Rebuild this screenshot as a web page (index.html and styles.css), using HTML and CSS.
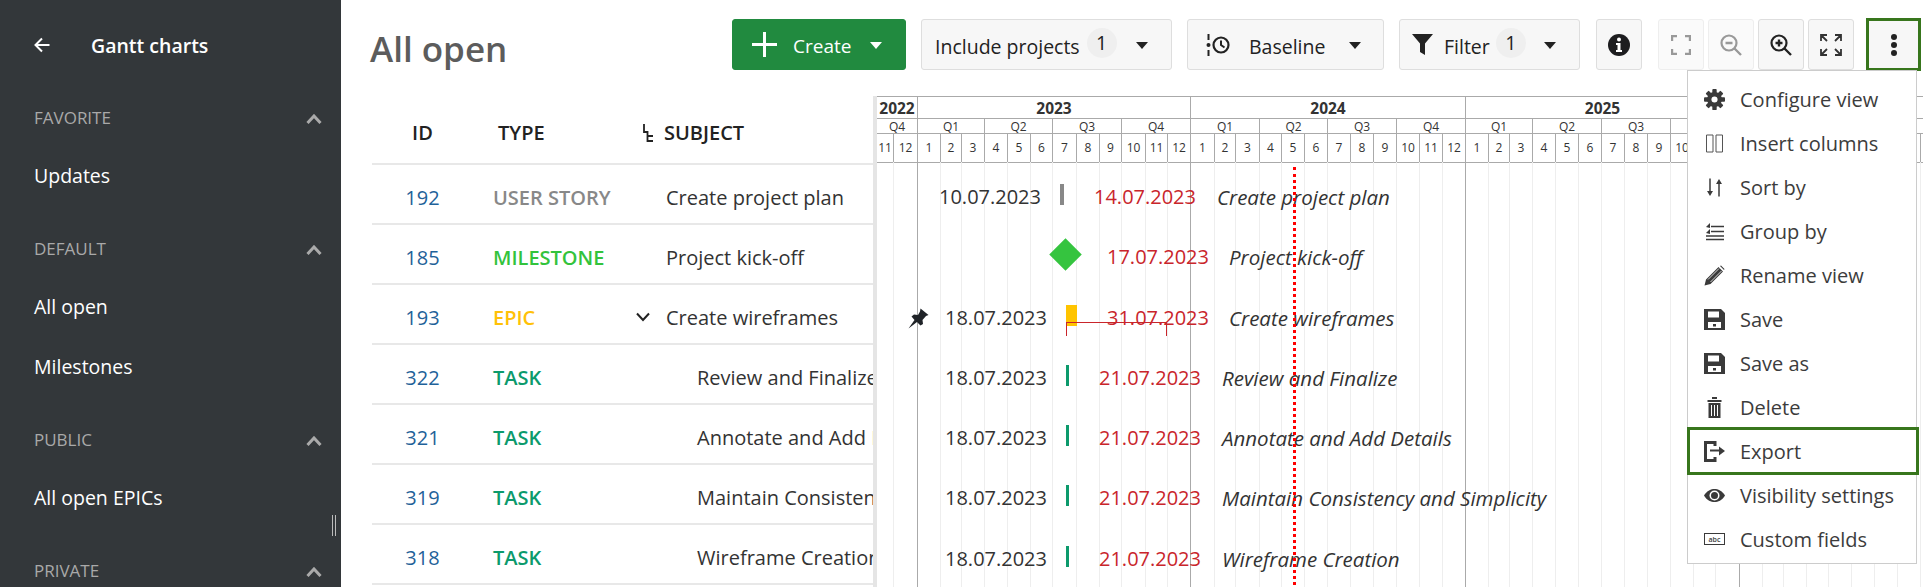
FILE: index.html
```html
<!DOCTYPE html>
<html lang="en">
<head>
    <meta charset="UTF-8">
    <title>All open - Gantt charts</title>
    <link rel="stylesheet" href="styles.css">
</head>
<body>
    <aside class="sidebar">
        <div class="side-title">
            <svg class="back-icon" width="16" height="16" viewBox="0 0 16 16"><path d="M15.5 8H2M8 1.5 1.5 8 8 14.5" fill="none" stroke="#fff" stroke-width="2"/></svg>
            <span>Gantt charts</span>
        </div>
        <div class="side-head">FAVORITE <svg class="chev" width="16" height="10" viewBox="0 0 16 10"><path d="M1.5 9 8 2l6.5 7" fill="none" stroke="#aaa" stroke-width="3"/></svg></div>
        <a class="side-item">Updates</a>
        <div class="side-head gap">DEFAULT <svg class="chev" width="16" height="10" viewBox="0 0 16 10"><path d="M1.5 9 8 2l6.5 7" fill="none" stroke="#aaa" stroke-width="3"/></svg></div>
        <a class="side-item">All open</a>
        <a class="side-item">Milestones</a>
        <div class="side-head gap">PUBLIC <svg class="chev" width="16" height="10" viewBox="0 0 16 10"><path d="M1.5 9 8 2l6.5 7" fill="none" stroke="#aaa" stroke-width="3"/></svg></div>
        <a class="side-item">All open EPICs</a>
        <div class="side-head gap">PRIVATE <svg class="chev" width="16" height="10" viewBox="0 0 16 10"><path d="M1.5 9 8 2l6.5 7" fill="none" stroke="#aaa" stroke-width="3"/></svg></div>
        <div class="side-handle"></div>
    </aside>

    <main class="content">
        <div class="topbar">
            <h1>All open</h1>
            <div class="toolbar">
                <button class="btn btn-create">
                    <svg width="25" height="25" viewBox="0 0 25 25"><path d="M12.5 0v25M0 12.5h25" stroke="#fff" stroke-width="3"/></svg>
                    <span>Create</span><i class="caret"></i>
                </button>
                <button class="btn btn-include">
                    <span>Include projects</span><b class="count">1</b><i class="caret"></i>
                </button>
                <button class="btn btn-baseline">
                    <svg width="24" height="24" viewBox="0 0 24 24"><path d="M2.5 1v6M2.5 17v6" stroke="#222" stroke-width="2"/><circle cx="2.5" cy="12" r="2" fill="#222"/><circle cx="15" cy="12" r="7.5" fill="none" stroke="#222" stroke-width="2.2"/><path d="M15 7.5V12l3.5 2.5" fill="none" stroke="#222" stroke-width="2"/></svg>
                    <span>Baseline</span><i class="caret"></i>
                </button>
                <button class="btn btn-filter">
                    <svg width="21" height="21" viewBox="0 0 21 21"><path d="M0 0h21l-8 9.5V21l-5-3V9.5z" fill="#222"/></svg>
                    <span>Filter</span><b class="count">1</b><i class="caret"></i>
                </button>
                <button class="btn btn-icon btn-info">
                    <svg width="22" height="22" viewBox="0 0 22 22"><circle cx="11" cy="11" r="11" fill="#1d1d1f"/><circle cx="11" cy="5.5" r="2" fill="#fff"/><path d="M8 9h4.5v7H14v2H8v-2h1.5v-5H8z" fill="#fff"/></svg>
                </button>
                <div class="zoom-group">
                    <button class="btn btn-icon dim">
                        <svg width="20" height="20" viewBox="0 0 20 20"><path d="M1 6V1h5M14 1h5v5M19 14v5h-5M6 19H1v-5" fill="none" stroke="#999" stroke-width="2.4"/></svg>
                    </button>
                    <button class="btn btn-icon dim">
                        <svg width="22" height="22" viewBox="0 0 22 22"><circle cx="9" cy="9" r="7.5" fill="none" stroke="#999" stroke-width="2.2"/><path d="M5.5 9h7M14.5 14.5 21 21" stroke="#999" stroke-width="2.4"/></svg>
                    </button>
                    <button class="btn btn-icon">
                        <svg width="22" height="22" viewBox="0 0 22 22"><circle cx="9" cy="9" r="7.5" fill="none" stroke="#222" stroke-width="2.2"/><path d="M5.5 9h7M9 5.5v7M14.5 14.5 21 21" stroke="#222" stroke-width="2.4"/></svg>
                    </button>
                    <button class="btn btn-icon">
                        <svg width="22" height="22" viewBox="0 0 22 22"><path d="M1 7V1h6M1 1l6 6M15 1h6v6M21 1l-6 6M1 15v6h6M1 21l6-6M21 15v6h-6M21 21l-6-6" fill="none" stroke="#333" stroke-width="1.8"/></svg>
                    </button>
                </div>
                <button class="btn btn-icon btn-more">
                    <svg width="8" height="24" viewBox="0 0 8 24"><circle cx="4" cy="4" r="3" fill="#222"/><circle cx="4" cy="12" r="3" fill="#222"/><circle cx="4" cy="20" r="3" fill="#222"/></svg>
                </button>
            </div>
        </div>

        <div class="workarea">
            <div class="table">
                <div class="row head">
                    <div class="c-id">ID</div>
                    <div class="c-type">TYPE</div>
                    <div class="c-subject">
                        <svg class="tree-icon" width="10" height="18" viewBox="0 0 10 18"><path d="M1 0v8h3.500v9H10M4.500 12H10" fill="none" stroke="#222" stroke-width="1.8"/></svg>
                        SUBJECT
                    </div>
                </div>
                <div class="row">
                    <div class="c-id"><a>192</a></div><div class="c-type t-story">USER STORY</div>
                    <div class="c-subject">Create project plan</div>
                </div>
                <div class="row">
                    <div class="c-id"><a>185</a></div><div class="c-type t-milestone">MILESTONE</div>
                    <div class="c-subject">Project kick-off</div>
                </div>
                <div class="row">
                    <div class="c-id"><a>193</a></div><div class="c-type t-epic">EPIC</div>
                    <div class="c-subject">
                        <svg class="fold-icon" width="14" height="10" viewBox="0 0 14 10"><path d="M1 1.500l6 6.500 6-6.500" fill="none" stroke="#222" stroke-width="2"/></svg>
                        Create wireframes
                    </div>
                </div>
                <div class="row">
                    <div class="c-id"><a>322</a></div><div class="c-type t-task">TASK</div>
                    <div class="c-subject child">Review and Finalize</div>
                </div>
                <div class="row">
                    <div class="c-id"><a>321</a></div><div class="c-type t-task">TASK</div>
                    <div class="c-subject child">Annotate and Add Details</div>
                </div>
                <div class="row">
                    <div class="c-id"><a>319</a></div><div class="c-type t-task">TASK</div>
                    <div class="c-subject child">Maintain Consistency and Simplicity</div>
                </div>
                <div class="row">
                    <div class="c-id"><a>318</a></div><div class="c-type t-task">TASK</div>
                    <div class="c-subject child">Wireframe Creation</div>
                </div>
            </div>

            <div class="gantt">
                <div class="tl-years">
                    <span class="w41">2022</span><span class="w273">2023</span><span class="w275">2024</span><span class="w274">2025</span><span class="w275"></span>
                </div>
                <div class="tl-quarters">
                    <span class="w41">Q4</span>
                    <span class="w67">Q1</span><span class="w68">Q2</span><span class="w69">Q3</span><span class="w69">Q4</span>
                    <span class="w69">Q1</span><span class="w68">Q2</span><span class="w69">Q3</span><span class="w69">Q4</span>
                    <span class="w67">Q1</span><span class="w69">Q2</span><span class="w69">Q3</span><span class="w69"></span>
                    <span class="w67"></span><span class="w68"></span><span class="w69"></span>
                </div>
                <div class="tl-months">
                    <span class="w17">11</span><span class="w24 end">12</span>
                    <span class="w23">1</span><span class="w21">2</span><span class="w23">3</span><span class="w23">4</span><span class="w23">5</span><span class="w22">6</span><span class="w24">7</span><span class="w23">8</span><span class="w22">9</span><span class="w24">10</span><span class="w22">11</span><span class="w23 end">12</span>
                    <span class="w24">1</span><span class="w21">2</span><span class="w24">3</span><span class="w22">4</span><span class="w23">5</span><span class="w23">6</span><span class="w23">7</span><span class="w23">8</span><span class="w23">9</span><span class="w23">10</span><span class="w23">11</span><span class="w23 end">12</span>
                    <span class="w23">1</span><span class="w21">2</span><span class="w23">3</span><span class="w23">4</span><span class="w23">5</span><span class="w23">6</span><span class="w23">7</span><span class="w23">8</span><span class="w23">9</span><span class="w23">10</span><span class="w22"></span><span class="w24 end"></span>
                    <span class="w23"></span><span class="w21"></span><span class="w23"></span><span class="w22"></span><span class="w23"></span><span class="w23"></span><span class="w23"></span><span class="w23"></span>
                </div>
                <div class="tl-body">
                    <div class="today"></div>
                    <div class="g-row">
                        <span class="g-date" style="left:62px">10.07.2023</span>
                        <i class="g-bar bar-story" style="left:183px;width:4px"></i>
                        <span class="g-date late" style="left:217px">14.07.2023</span>
                        <span class="g-name" style="left:340px">Create project plan</span>
                    </div>
                    <div class="g-row">
                        <i class="g-diamond" style="left:177px"></i>
                        <span class="g-date late" style="left:230px">17.07.2023</span>
                        <span class="g-name" style="left:352px">Project kick-off</span>
                    </div>
                    <div class="g-row">
                        <svg class="g-pin" width="21" height="21" viewBox="0 0 21 21"><path d="M12.500 0.500 20.500 7l-2.500 1-3.500 4 .5 4-2.500 1.500-3.500-3.500L.5 20.500 6.500 12 3.500 8.500 6 6.500l4 .5 2-3.500z" fill="#1f2328"/></svg>
                        <span class="g-date" style="left:68px">18.07.2023</span>
                        <i class="g-bar bar-epic" style="left:189px;width:11px"></i>
                        <i class="g-base" style="left:189px;width:101px"></i>
                        <span class="g-date late" style="left:230px">31.07.2023</span>
                        <span class="g-name" style="left:352px">Create wireframes</span>
                    </div>
                    <div class="g-row">
                        <span class="g-date" style="left:68px">18.07.2023</span>
                        <i class="g-bar bar-task" style="left:189px;width:3px"></i>
                        <span class="g-date late" style="left:222px">21.07.2023</span>
                        <span class="g-name" style="left:345px">Review and Finalize</span>
                    </div>
                    <div class="g-row">
                        <span class="g-date" style="left:68px">18.07.2023</span>
                        <i class="g-bar bar-task" style="left:189px;width:3px"></i>
                        <span class="g-date late" style="left:222px">21.07.2023</span>
                        <span class="g-name" style="left:345px">Annotate and Add Details</span>
                    </div>
                    <div class="g-row">
                        <span class="g-date" style="left:68px">18.07.2023</span>
                        <i class="g-bar bar-task" style="left:189px;width:3px"></i>
                        <span class="g-date late" style="left:222px">21.07.2023</span>
                        <span class="g-name" style="left:345px">Maintain Consistency and Simplicity</span>
                    </div>
                    <div class="g-row">
                        <span class="g-date" style="left:68px">18.07.2023</span>
                        <i class="g-bar bar-task" style="left:189px;width:3px"></i>
                        <span class="g-date late" style="left:222px">21.07.2023</span>
                        <span class="g-name" style="left:345px">Wireframe Creation</span>
                    </div>
                </div>
            </div>
        </div>

        <ul class="menu">
            <li><svg width="21" height="21" viewBox="0 0 24 24"><g fill="#3a3a3a"><rect x="9.500" y="0" width="5" height="24" rx="1"/><rect x="9.500" y="0" width="5" height="24" rx="1" transform="rotate(45 12 12)"/><rect x="9.500" y="0" width="5" height="24" rx="1" transform="rotate(90 12 12)"/><rect x="9.500" y="0" width="5" height="24" rx="1" transform="rotate(135 12 12)"/><circle cx="12" cy="12" r="8.500"/></g><circle cx="12" cy="12" r="3.500" fill="#fff"/></svg>Configure view</li>
            <li><svg width="21" height="21" viewBox="0 0 21 21"><path d="M2.500 2h6.500v17H2.500zM12 2h6.500v17H12z" fill="none" stroke="#555" stroke-width="1"/></svg>Insert columns</li>
            <li><svg width="21" height="21" viewBox="0 0 21 21"><path d="M6 1.500v14" stroke="#3a3a3a" stroke-width="1.500"/><path d="M3 14h6l-3 5z" fill="#3a3a3a"/><path d="M15 19.500v-14" stroke="#3a3a3a" stroke-width="1.500"/><path d="M12 7h6l-3-5z" fill="#3a3a3a"/></svg>Sort by</li>
            <li><svg width="21" height="21" viewBox="0 0 21 21"><path d="M7 5.500h13M7 10.500h13M2 15h18M2 18.500h18" stroke="#3a3a3a" stroke-width="1.500"/><path d="M6 2v5l-4-1zM6 8v5l-4-1z" fill="#3a3a3a"/></svg>Group by</li>
            <li><svg width="21" height="21" viewBox="0 0 21 21"><path d="M.5 20.500 2 14.500 14.500 2l4.500 4.500L6.500 19zM16 1l1-.5 3.500 3.500-.5 1z" fill="#3a3a3a"/><path d="M4 14.500 15 3.500M6.500 17 17.500 6" stroke="#fff" stroke-width=".8"/></svg>Rename view</li>
            <li><svg width="21" height="21" viewBox="0 0 21 21"><path d="M0 0h17l4 4v17H0z" fill="#3a3a3a"/><path d="M4 2.500h11v6H4z" fill="#fff"/><path d="M4 13h13v6H4z" fill="#fff"/><rect x="9" y="15" width="3" height="2.500" fill="#3a3a3a"/></svg>Save</li>
            <li><svg width="21" height="21" viewBox="0 0 21 21"><path d="M0 0h17l4 4v17H0z" fill="#3a3a3a"/><path d="M4 2.500h11v6H4z" fill="#fff"/><path d="M4 13h13v6H4z" fill="#fff"/><rect x="9" y="15" width="3" height="2.500" fill="#3a3a3a"/></svg>Save as</li>
            <li><svg width="21" height="21" viewBox="0 0 21 21"><path d="M3.500 3h14v2h-14zM8 0h5v2H8zM4.500 6h12v15h-12z" fill="#3a3a3a"/><path d="M7.500 8v11M10.500 8v11M13.500 8v11" stroke="#fff" stroke-width="1"/></svg>Delete</li>
            <li class="active"><svg width="21" height="21" viewBox="0 0 21 21"><path d="M11 5V1.500H1.500v18H11V16" fill="none" stroke="#3a3a3a" stroke-width="3"/><path d="M6 9.500h9.500" stroke="#3a3a3a" stroke-width="2"/><path d="M15 5.500l6 4.500-6 4.500z" fill="#3a3a3a"/></svg>Export</li>
            <li><svg width="21" height="21" viewBox="0 0 21 21"><path d="M0 10.500C3 5.500 7 4 10.500 4S18 5.500 21 10.500C18 15.500 14 17 10.500 17S3 15.500 0 10.500z" fill="#3a3a3a"/><circle cx="10.500" cy="10.500" r="5" fill="#fff"/><circle cx="10.500" cy="10.500" r="3.500" fill="#3a3a3a"/></svg>Visibility settings</li>
            <li><svg width="21" height="21" viewBox="0 0 21 21"><rect x=".5" y="4.500" width="20" height="11" fill="none" stroke="#3a3a3a"/><text x="10.500" y="13" text-anchor="middle" class="abc">abc</text></svg>Custom fields</li>
        </ul>
    </main>
</body>
</html>
```

FILE: styles.css
```css
* {
    box-sizing: border-box;
}
html, body {
    margin: 0;
    height: 587px;
    overflow: hidden;
}
body {
    display: flex;
    font-family: "Open Sans", "Noto Sans", sans-serif;
    color: #333;
    background-color: #fff;
}

/* sidebar */
.sidebar {
    position: relative;
    flex: none;
    width: 341px;
    height: 587px;
    padding: 30px 19px 0 34px;
    background-color: #33373a;
    color: #fff;
}
.side-title {
    display: flex;
    align-items: center;
    height: 30px;
    margin-bottom: 42px;
    font-size: 19.500px;
    font-weight: 600;
}
.back-icon {
    margin-right: 41px;
}
.side-head {
    display: flex;
    align-items: center;
    justify-content: space-between;
    height: 30px;
    margin-bottom: 13px;
    font-size: 17px;
    color: #a9a9a9;
}
.side-head.gap {
    margin-top: 28px;
}
.side-item {
    display: flex;
    align-items: center;
    height: 60px;
    font-size: 19.500px;
}
.chev {
    margin-top: 4px;
}
.side-handle {
    position: absolute;
    left: 332px;
    top: 515px;
    width: 4px;
    height: 21px;
    border-left: 1px solid #bbb;
    border-right: 1px solid #bbb;
}

/* top bar */
.content {
    position: relative;
    flex: 1;
    min-width: 0;
}
.topbar {
    display: flex;
    height: 70px;
    padding: 19px 0 0 29px;
}
h1 {
    flex: 1;
    margin: 8px 0 0;
    font-size: 35px;
    font-weight: 600;
    line-height: 44px;
    color: #5c5c5c;
}
.toolbar {
    display: flex;
    margin-right: 6px;
}
.btn {
    display: flex;
    align-items: center;
    flex: none;
    height: 51px;
    padding: 0;
    border: 1px solid #dedede;
    border-radius: 3px;
    background-color: #f7f7f7;
    color: #222;
    font-family: inherit;
    font-size: 19.500px;
}
.btn span {
    padding-top: 3px;
}
.caret {
    width: 0;
    height: 0;
    margin-top: 2px;
    border-left: 6px solid transparent;
    border-right: 6px solid transparent;
    border-top: 7px solid #222;
}
.count {
    width: 30px;
    height: 30px;
    margin-top: -3px;
    border-radius: 50%;
    background-color: #efefef;
    font-weight: 400;
    line-height: 30px;
    text-align: center;
}
.btn-create {
    width: 174px;
    padding-left: 19px;
    border-color: #218a3f;
    background-color: #218a3f;
    color: #fff;
    font-size: 19px;
}
.btn-create span {
    margin: 0 19px 0 16px;
}
.btn-create .caret {
    border-top-color: #fff;
}
.btn-include {
    width: 251px;
    margin-left: 15px;
    padding-left: 13px;
}
.btn-include .count {
    margin-left: 7px;
}
.btn-include .caret {
    margin-left: 19px;
}
.btn-baseline {
    width: 197px;
    margin-left: 15px;
    padding-left: 18px;
}
.btn-baseline span {
    margin: 0 24px 0 19px;
}
.btn-filter {
    width: 181px;
    margin-left: 15px;
    padding-left: 12px;
}
.btn-filter span {
    margin: 0 6px 0 11px;
}
.btn-filter .caret {
    margin-left: 18px;
}
.btn-icon {
    justify-content: center;
    width: 46px;
}
.btn-info {
    margin-left: 16px;
}
.zoom-group {
    display: flex;
    gap: 4px;
    margin-left: 16px;
}
.btn.dim {
    border-color: #eee;
    background-color: #fafafa;
}
.btn-more {
    width: 55px;
    height: 53px;
    margin: -1px 0 0 12px;
    border: 3px solid #38761d;
    border-radius: 0;
}

/* table */
.workarea {
    display: flex;
    margin: 26px 0 0 31px;
}
.table {
    flex: none;
    width: 501px;
    overflow: hidden;
    font-size: 20px;
}
.row {
    display: flex;
    align-items: center;
    height: 60px;
    padding-top: 6px;
    border-bottom: 2px solid #e8e8e8;
    white-space: nowrap;
}
.row.head {
    height: 69px;
    padding-top: 5px;
    font-weight: 600;
    color: #222;
}
.c-id {
    flex: none;
    width: 101px;
    text-align: center;
}
.c-id a {
    color: #1f6299;
}
.c-type {
    flex: none;
    width: 193px;
    padding-left: 20px;
    font-weight: 600;
}
.head .c-type {
    padding-left: 25px;
}
.head .c-subject {
    margin-left: -2px;
}
.t-story { color: #888; }
.t-milestone { color: #33c33c; }
.t-epic { color: #ffc107; }
.t-task { color: #0c9a6c; }
.c-subject {
    position: relative;
}
.c-subject.child {
    padding-left: 31px;
}
.tree-icon {
    position: absolute;
    left: -21px;
    top: 5px;
}
.fold-icon {
    position: absolute;
    left: -30px;
    top: 8px;
}

/* gantt */
.gantt {
    position: relative;
    flex: none;
    width: 1050px;
    height: 491px;
    overflow: hidden;
    border-left: 4px solid #e5e5e5;
    font-size: 12px;
}
.tl-years, .tl-quarters, .tl-months {
    display: flex;
    border-bottom: 1px solid #aaa;
    text-align: center;
}
.tl-years span, .tl-quarters span, .tl-months span {
    flex: none;
    border-right: 1px solid #aaa;
}
.tl-years {
    height: 23px;
    border-top: 1px solid #aaa;
    font-size: 15.500px;
    font-weight: 700;
    line-height: 22px;
}
.tl-quarters {
    height: 15px;
    line-height: 16px;
}
.tl-months {
    height: 29px;
    line-height: 28px;
}
.tl-months span {
    position: relative;
}
.tl-months span::after {
    content: "";
    position: absolute;
    top: 28px;
    right: -1px;
    height: 430px;
    border-right: 1px solid #eee;
}
.tl-months span.end::after {
    border-right-color: #aaa;
}
.w17 { width: 17px; }
.w21 { width: 21px; }
.w22 { width: 22px; }
.w23 { width: 23px; }
.w24 { width: 24px; }
.w41 { width: 41px; }
.w67 { width: 67px; }
.w68 { width: 68px; }
.w69 { width: 69px; }
.w273 { width: 273px; }
.w274 { width: 274px; }
.w275 { width: 275px; }

.tl-body {
    position: relative;
}
.today {
    position: absolute;
    left: 416px;
    top: 4px;
    height: 430px;
    border-left: 3px dotted #f00;
    z-index: 2;
}
.g-row {
    position: relative;
    height: 60.300px;
}
.g-date, .g-name {
    position: absolute;
    top: 21px;
    font-size: 20px;
    line-height: 26px;
    white-space: nowrap;
}
.g-name {
    font-size: 20.500px;
    font-style: italic;
}
.late {
    color: #c9252b;
}
.g-bar {
    position: absolute;
    top: 21px;
    height: 21px;
}
.bar-story { background-color: #888; }
.bar-epic { background-color: #ffc400; }
.bar-task { background-color: #0c9a6c; }
.g-diamond {
    position: absolute;
    top: 20px;
    width: 23px;
    height: 23px;
    background-color: #35c43f;
    transform: rotate(45deg);
}
.g-pin {
    position: absolute;
    left: 31px;
    top: 24px;
}
.g-base {
    position: absolute;
    top: 38px;
    height: 14px;
    border: 1px solid #c9252b;
    border-bottom: none;
    z-index: 1;
}

/* menu */
.menu {
    position: absolute;
    left: 1346px;
    top: 70px;
    width: 230px;
    height: 494px;
    margin: 0;
    padding: 6px 0 0;
    border: 1px solid #ccc;
    background-color: #fff;
    list-style: none;
    font-size: 20px;
    color: #3c3c3c;
    z-index: 5;
}
.menu li {
    display: flex;
    align-items: center;
    height: 44px;
    padding-left: 16px;
    white-space: nowrap;
}
.menu svg {
    flex: none;
    margin-right: 15px;
}
.menu li.active {
    height: 48px;
    margin: -2px -3px -2px -1px;
    padding-left: 14px;
    border: 3px solid #38761d;
}
.abc {
    font-size: 7px;
    font-weight: 600;
    fill: #3a3a3a;
}
```
